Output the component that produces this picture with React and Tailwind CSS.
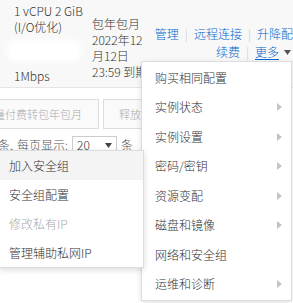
import React from 'react';

const font = { fontFamily: '"Noto Sans CJK SC", "Noto Sans", sans-serif' };

function Caret({ className = '' }) {
  return (
    <svg width="5" height="8" viewBox="0 0 5 8" className={className}>
      <polygon points="0,0 5,4 0,8" fill="#c4c4c4" />
    </svg>
  );
}

const mainItems = [
  { label: '购买相同配置', sub: false },
  { label: '实例状态', sub: true },
  { label: '实例设置', sub: true },
  { label: '密码/密钥', sub: true },
  { label: '资源变配', sub: true },
  { label: '磁盘和镜像', sub: true },
  { label: '网络和安全组', sub: false },
  { label: '运维和诊断', sub: true },
];

const subItems = [
  { label: '加入安全组', active: true },
  { label: '安全组配置' },
  { label: '修改私有IP', disabled: true },
  { label: '管理辅助私网IP' },
];

export default function App() {
  return (
    <div className="relative w-[293px] h-[303px] overflow-hidden bg-white text-[12px] font-light text-[#333]" style={font}>
      {/* Instance row */}
      <div className="flex h-[88px] bg-[#f8f8f8] border-b border-[#e5e5e5]">
        <div className="w-[92px] shrink-0 pl-[14px] pt-[3px] leading-[16.3px] relative">
          <div className="whitespace-nowrap">1 vCPU 2 GiB</div>
          <div>(I/O优化)</div>
          <div className="h-[32.6px] relative">
            <div className="absolute left-[-8px] top-[4px] w-[76px] h-[22px] rounded-full bg-white blur-[3px]" />
          </div>
          <div>1Mbps</div>
        </div>
        <div className="w-[54px] shrink-0 pt-[16px] leading-[16px] whitespace-nowrap">
          <div>包年包月</div>
          <div>2022年12</div>
          <div>月12日</div>
          <div>23:59 到期</div>
        </div>
        <div className="flex-1 flex flex-col items-end pt-[25px] leading-[18px] text-[#0066cc] whitespace-nowrap">
          <div className="flex items-center">
            <span>管理</span>
            <span className="mx-[6px] text-[#ccc]">|</span>
            <span>远程连接</span>
            <span className="mx-[6px] text-[#ccc]">|</span>
            <span>升降配</span>
          </div>
          <div className="flex items-center pr-[2px]">
            <span>续费</span>
            <span className="mx-[6px] text-[#ccc]">|</span>
            <span className="underline underline-offset-2">更多</span>
            <svg width="7" height="5" viewBox="0 0 7 5" className="ml-[5px]">
              <polygon points="0,0 7,0 3.5,5" fill="#555" />
            </svg>
          </div>
        </div>
      </div>

      {/* Batch buttons */}
      <div className="flex gap-[4px] mt-[11px] ml-[-34px]">
        <div className="h-[30px] px-[16px] flex items-center border border-[#ddd] bg-[#fafafa] text-[#aaa] text-[11px] whitespace-nowrap">
          按量付费转包年包月
        </div>
        <div className="h-[30px] px-[15px] flex items-center border border-[#ddd] bg-[#fafafa] text-[#aaa] text-[11px] whitespace-nowrap">
          释放设置
        </div>
      </div>

      {/* Pagination */}
      <div className="flex items-center mt-[6px] ml-[-2px] h-[20px] whitespace-nowrap text-[#555]">
        <span>条,</span>
        <span className="ml-[4px]">每页显示:</span>
        <div className="ml-[4px] w-[45px] h-[19px] border border-[#ccc] flex items-center justify-between px-[4px] text-[#333]">
          <span>20</span>
          <svg width="7" height="5" viewBox="0 0 7 5">
            <polygon points="0,0 7,0 3.5,5" fill="#444" />
          </svg>
        </div>
        <span className="ml-[4px]">条</span>
      </div>

      {/* More menu */}
      <div className="absolute left-[141px] top-[61px] w-[151px] py-[1px] bg-white border border-[#ddd] shadow-[0_2px_6px_rgba(0,0,0,0.12)] z-10">
        {mainItems.map((item) => (
          <div key={item.label} className="h-[29.5px] flex items-center justify-between pl-[13px] pr-[9px]">
            <span>{item.label}</span>
            {item.sub && <Caret />}
          </div>
        ))}
      </div>

      {/* Security group submenu */}
      <div className="absolute left-[-1px] top-[150px] w-[145px] bg-white border border-[#ddd] shadow-[0_2px_6px_rgba(0,0,0,0.15)] z-20">
        {subItems.map((item) => (
          <div
            key={item.label}
            className={`h-[29px] flex items-center pl-[9px] ${item.active ? 'bg-[#f4f4f4]' : ''} ${item.disabled ? 'text-[#aaa]' : ''}`}
          >
            {item.label}
          </div>
        ))}
      </div>
    </div>
  );
}
